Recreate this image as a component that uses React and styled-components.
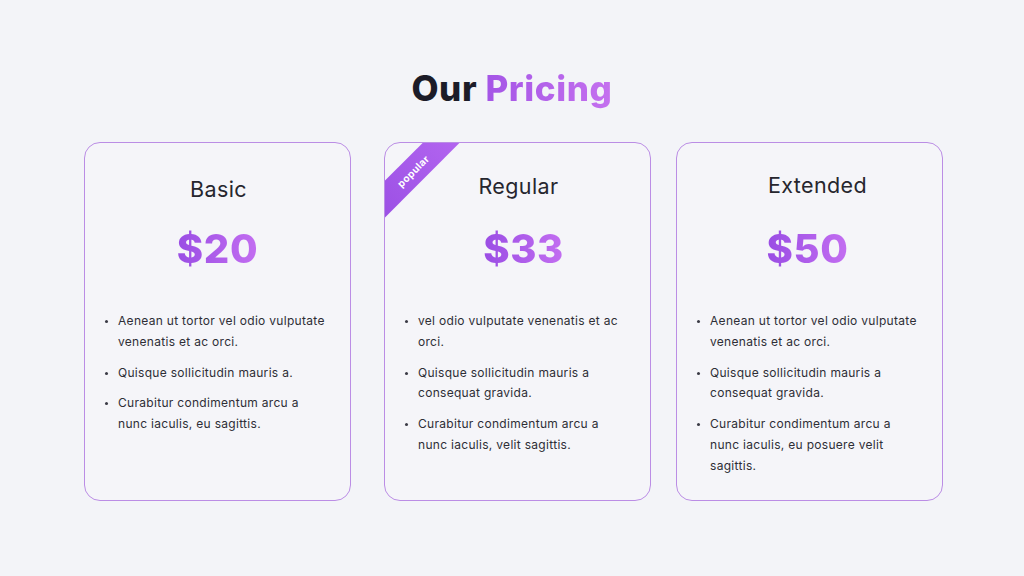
import React from 'react';
import styled, { createGlobalStyle } from 'styled-components';

const GlobalStyle = createGlobalStyle`
  html, body {
    margin: 0;
    padding: 0;
    background: #f3f4f8;
  }
  body {
    font-family: Inter, 'Open Sans', sans-serif;
  }
`;

const Page = styled.div`
  width: 1024px;
  height: 576px;
  box-sizing: border-box;
  padding-top: 65px;
  display: flex;
  flex-direction: column;
  align-items: center;
`;

const Heading = styled.h1`
  margin: 0;
  font-family: Inter, sans-serif;
  font-weight: 800;
  font-size: 35px;
  line-height: 46px;
  letter-spacing: 0.6px;
  color: #1c1c28;

  span {
    background: linear-gradient(90deg, #a455e6, #c571ef);
    -webkit-background-clip: text;
    background-clip: text;
    color: transparent;
  }
`;

const Cards = styled.div`
  margin-top: 31px;
  margin-left: 3px;
  display: flex;
  gap: 25px;
`;

const Card = styled.div`
  position: relative;
  overflow: hidden;
  width: 267px;
  height: 359px;
  box-sizing: border-box;
  border: 1.2px solid #bb8de5;
  border-radius: 16px;
  background: #f5f5f9;
  margin-left: ${(p) => (p.$popular ? 8 : 0)}px;
  padding-top: ${(p) => p.$top}px;
`;

const Ribbon = styled.div`
  position: absolute;
  left: -32px;
  top: 15px;
  width: 120px;
  height: 26px;
  transform: rotate(-45deg);
  background: linear-gradient(90deg, #9a4fe4, #b466f0);
  color: #fff;
  font-size: 10px;
  font-weight: 700;
  display: flex;
  align-items: center;
  justify-content: center;
  letter-spacing: 0.4px;
`;

const Title = styled.div`
  text-align: center;
  padding-left: ${(p) => p.$shift * 2}px;
  font-size: 21.5px;
  line-height: 28px;
  letter-spacing: 0.4px;
  color: #26262e;
  font-weight: 400;
`;

const Price = styled.div`
  margin-top: ${(p) => p.$gap}px;
  padding-left: ${(p) => Math.max(p.$shift, 0) * 2}px;
  padding-right: ${(p) => Math.max(-p.$shift, 0) * 2}px;
  text-align: center;

  span {
    font-size: 40px;
    line-height: 48px;
    font-weight: 800;
    letter-spacing: 0.6px;
    background: linear-gradient(90deg, #9a4de4, #c36ef1);
    -webkit-background-clip: text;
    background-clip: text;
    color: transparent;
  }
`;

const List = styled.ul`
  margin: 38px 0 0;
  padding: 0 23px 0 33px;
  list-style: none;
  display: flex;
  flex-direction: column;
  gap: 10px;
`;

const Item = styled.li`
  position: relative;
  font-size: 12px;
  line-height: 20.8px;
  letter-spacing: 0.3px;
  color: #2e2e36;

  &::before {
    content: '';
    position: absolute;
    left: -13px;
    top: 9px;
    width: 3px;
    height: 3px;
    border-radius: 50%;
    background: #3a3a44;
  }
`;

const plans = [
  {
    name: 'Basic',
    price: '$20',
    top: 32,
    gap: 22,
    titleShift: 1,
    priceShift: 0,
    items: [
      'Aenean ut tortor vel odio vulputate venenatis et ac orci.',
      'Quisque sollicitudin mauris a.',
      'Curabitur condimentum arcu a nunc iaculis, eu sagittis.',
    ],
  },
  {
    name: 'Regular',
    price: '$33',
    top: 29,
    gap: 25,
    titleShift: 1,
    priceShift: 6,
    popular: true,
    items: [
      'vel odio vulputate venenatis et ac orci.',
      'Quisque sollicitudin mauris a consequat gravida.',
      'Curabitur condimentum arcu a nunc iaculis, velit sagittis.',
    ],
  },
  {
    name: 'Extended',
    price: '$50',
    top: 28,
    gap: 26,
    titleShift: 8,
    priceShift: -2,
    items: [
      'Aenean ut tortor vel odio vulputate venenatis et ac orci.',
      'Quisque sollicitudin mauris a consequat gravida.',
      'Curabitur condimentum arcu a nunc iaculis, eu posuere velit sagittis.',
    ],
  },
];

const App = () => {
  return (
    <>
      <GlobalStyle />
      <Page>
        <Heading>
          Our <span>Pricing</span>
        </Heading>
        <Cards>
          {plans.map((plan) => (
            <Card key={plan.name} $top={plan.top} $popular={plan.popular}>
              {plan.popular && <Ribbon>popular</Ribbon>}
              <Title $shift={plan.titleShift}>{plan.name}</Title>
              <Price $gap={plan.gap} $shift={plan.priceShift}>
                <span>{plan.price}</span>
              </Price>
              <List>
                {plan.items.map((item) => (
                  <Item key={item}>{item}</Item>
                ))}
              </List>
            </Card>
          ))}
        </Cards>
      </Page>
    </>
  );
};

export default App;
